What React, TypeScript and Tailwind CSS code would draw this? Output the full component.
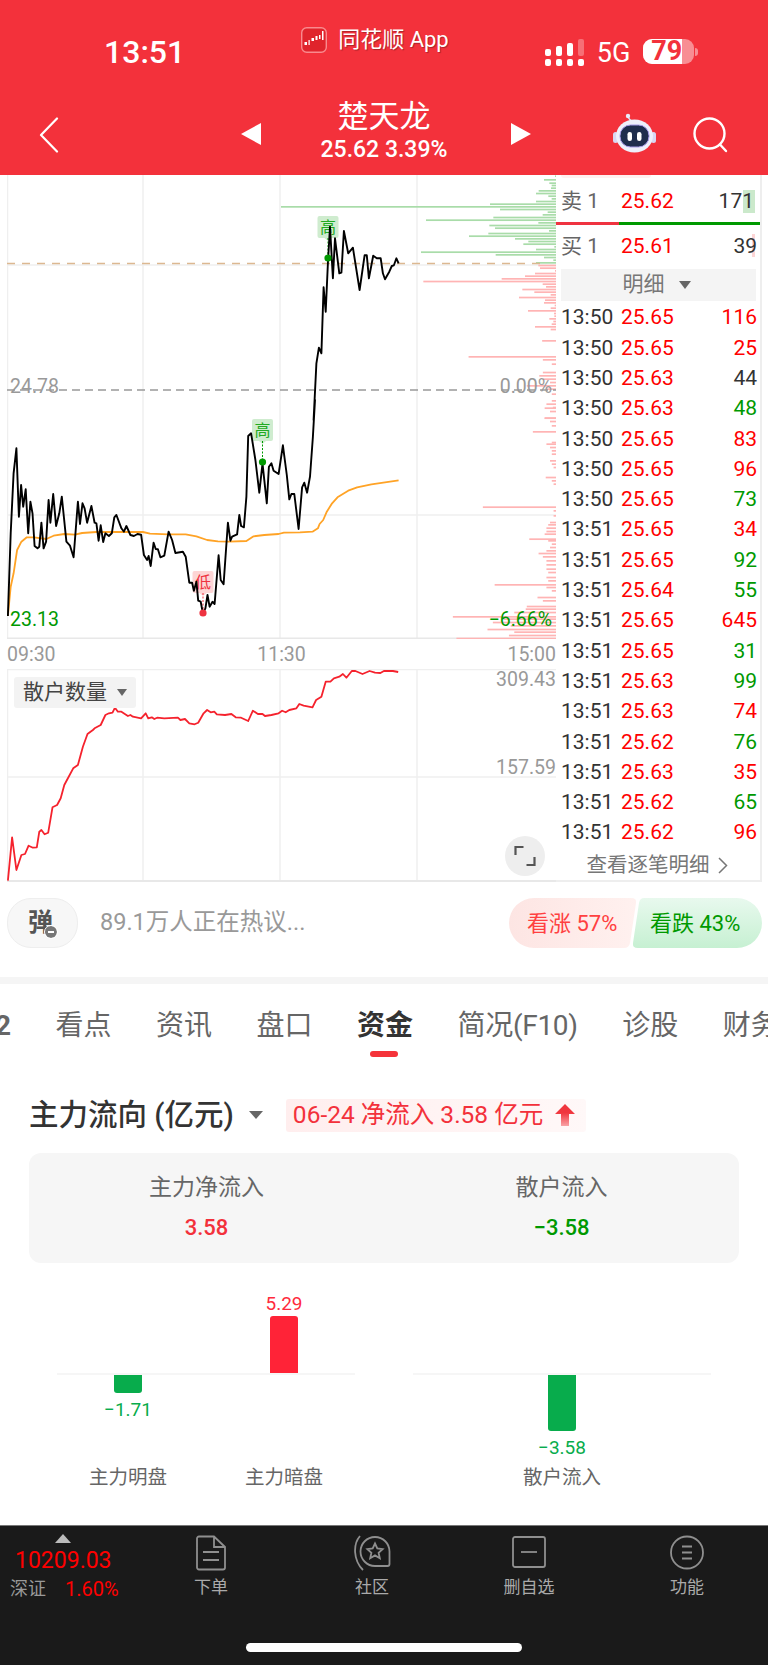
import React from 'react';

type P = [number, number];

const priceA: P[] = [[22,648],[30,400],[38,220],[46,145],[53,350],[59,255],[65,320],[72,268],[79,400],[85,305],[91,340],[97,438],[105,445],[110,440],[116,368],[122,445],[129,425],[136,300],[141,368],[149,282],[157,378],[166,340],[173,290],[186,425],[196,437],[206,472],[218,305],[224,372],[231,310],[237,325],[244,368],[256,318],[265,368],[270,370],[276,422],[282,376],[289,426],[295,400],[305,408],[313,400],[320,352],[326,345],[340,385],[347,395],[354,378],[365,405],[375,408],[385,402],[395,404],[403,465],[412,480],[416,468],[422,498],[430,428],[436,447],[442,448],[449,472],[460,467],[472,395],[482,420],[491,459],[512,455],[520,470],[530,548],[538,548],[543,572],[550,545],[555,602],[562,605],[568,640],[575,625],[581,585],[587,620],[595,605],[601,612],[612,466],[618,540],[626,553],[638,368],[645,422],[650,410],[664,403],[670,345],[675,378],[683,382],[690,290],[695,108],[703,100],[715,180],[726,278],[735,190],[747,310],[753,200],[760,190],[766,212],[780,222],[792,136],[803,225],[810,298],[816,282],[824,282],[836,387],[846,262],[852,248],[860,278],[868,230],[876,110],[882,0]];
const priceB: P[] = [[878,750],[886,580],[893,533],[900,550],[906,352],[912,425],[918,280],[924,170],[932,325],[938,205],[950,310],[956,308],[963,183],[975,250],[988,233],[1007,360],[1021,256],[1027,256],[1033,325],[1045,257],[1055,265],[1066,265],[1072,310],[1078,328],[1090,305],[1097,288],[1103,286],[1110,265],[1116,280]];
const avg: P[] = [[22,648],[30,560],[38,520],[48,450],[60,425],[75,412],[95,412],[130,417],[150,407],[180,402],[210,404],[230,399],[270,396],[350,396],[400,396],[420,401],[470,403],[520,403],[550,409],[580,420],[610,424],[640,425],[690,423],[710,409],[740,405],[780,402],[795,398],[840,397],[875,395],[890,385],[895,372],[905,360],[915,335],[930,310],[945,292],[975,272],[1000,262],[1040,253],[1116,241]];
const retail: P[] = [[22,692],[34,562],[46,660],[60,615],[70,612],[80,587],[92,593],[103,592],[110,545],[116,540],[125,553],[135,548],[147,472],[160,465],[170,445],[180,405],[190,385],[205,355],[218,345],[232,290],[245,252],[260,240],[265,235],[282,225],[295,195],[305,190],[315,188],[322,173],[330,185],[340,185],[358,198],[365,195],[372,200],[395,205],[408,190],[415,205],[425,202],[432,207],[440,203],[460,205],[498,203],[505,210],[518,207],[530,220],[545,223],[555,218],[570,190],[580,180],[590,187],[600,185],[607,193],[630,195],[648,192],[660,202],[675,203],[695,213],[708,182],[722,192],[735,192],[742,198],[760,195],[780,190],[790,182],[800,187],[810,180],[830,175],[838,162],[850,167],[875,172],[885,150],[900,140],[912,95],[925,95],[935,85],[950,80],[960,72],[970,83],[985,63],[995,63],[1015,72],[1035,63],[1050,68],[1065,69],[1075,63],[1100,63],[1115,66]];

// y, left edge of the bar as read off the crops
const greenBars: P[] = [[16,465],[27,432],[37,448],[44,455],[52,453],[60,416],[68,408],[76,445],[84,455],[92,408],[100,270],[116,300],[124,443],[132,428],[140,280],[148,78],[156,415],[164,268],[172,285],[180,447],[188,265],[196,207],[204,345],[212,385],[220,370],[228,463],[236,408],[244,63],[252,287],[260,432],[268,460],[276,408]];
const redBarsTop: P[] = [[284,415],[292,420],[300,465],[308,405],[316,375],[324,305],[332,70],[340,428],[348,438],[356,367],[364,403],[372,452],[380,357],[388,435],[396,432],[404,464],[412,452],[420,384],[428,462],[436,463],[444,448],[452,460],[460,455],[468,405],[476,452]];
const redBarsMid: P[] = [[510,1518],[558,1312],[567,1520],[580,1545],[605,1520],[615,1510],[625,1520],[635,1540],[645,1475],[655,1530],[670,1545],[690,1545],[710,1548],[742,1525],[765,1545]];
const redBarsLow: P[] = [[10,1530],[22,1525],[32,1540],[52,1525],[62,1540],[93,1492],[125,1545],[130,1530],[140,1540],[150,1545],[160,1545],[180,1540],[190,1545],[200,1550],[230,1528],[240,1545],[250,1550],[319,1352],[330,1550],[345,1550],[365,1540],[372,1535],[382,1530],[392,1530],[400,1525],[415,1482],[420,1535],[430,1545],[440,1540],[450,1530],[458,1508],[468,1520],[480,1530],[492,1530],[505,1530],[515,1535],[530,1530],[540,1535],[552,1385],[560,1530],[570,1545],[590,1505],[600,1520],[617,1475],[625,1472],[635,1440],[648,1268],[655,1410],[665,1380],[675,1430],[686,1365],[694,1440],[704,1425],[713,1278]];

const ticks: [string, string, string][] = [
  ['13:50', '25.65', '116'], ['13:50', '25.65', '25'], ['13:50', '25.63', '44'],
  ['13:50', '25.63', '48'], ['13:50', '25.65', '83'], ['13:50', '25.65', '96'],
  ['13:50', '25.65', '73'], ['13:51', '25.65', '34'], ['13:51', '25.65', '92'],
  ['13:51', '25.64', '55'], ['13:51', '25.65', '645'], ['13:51', '25.65', '31'],
  ['13:51', '25.63', '99'], ['13:51', '25.63', '74'], ['13:51', '25.62', '76'],
  ['13:51', '25.63', '35'], ['13:51', '25.62', '65'], ['13:51', '25.62', '96'],
];
const tickColors = ['text-[#f00]', 'text-[#f00]', 'text-[#333]', 'text-[#090]', 'text-[#f00]', 'text-[#f00]', 'text-[#090]', 'text-[#f00]', 'text-[#090]', 'text-[#090]', 'text-[#f00]', 'text-[#090]', 'text-[#090]', 'text-[#f00]', 'text-[#090]', 'text-[#f00]', 'text-[#090]', 'text-[#f00]'];

function line(points: P[], y0: number) {
  return points.map(([x, y]) => `${(x / 2.8).toFixed(1)},${(y0 + y / 3).toFixed(1)}`).join(' ');
}

function Tag({ x, y, text, bg, color }: { x: number; y: number; text: string; bg: string; color: string }) {
  return (
    <g>
      <rect x={x} y={y} width="21" height="22" rx="2" fill={bg} />
      <path d={`M${x + 7} ${y + 22}l3.500 3 3.500-3z`} fill={bg} />
      <text x={x + 10.5} y={y + 17} textAnchor="middle" fontSize="16" fill={color}>{text}</text>
    </g>
  );
}

function PriceChart() {
  const grid = '#efefef';
  return (
    <div className="relative h-[464px]">
      <svg width="549" height="464" viewBox="7 175 549 464" className="block">
        {[7.5, 143, 280, 417].map((x) => <line key={x} x1={x} x2={x} y1="175" y2="639" stroke={grid} strokeWidth="1.500" />)}
        <line x1="7" x2="556" y1="265" y2="265" stroke={grid} strokeWidth="1.500" />
        <line x1="7" x2="556" y1="515" y2="515" stroke={grid} strokeWidth="1.500" />
        <line x1="7" x2="556" y1="638.500" y2="638.500" stroke="#e8e8e8" strokeWidth="2" />
        {greenBars.map(([y, l]) => <rect key={y} x={400 + l / 3} y={170 + y / 3} width={156 - l / 3} height="1.700" fill="#a9dca9" />)}
        <rect x="281" y="206" width="275" height="1.700" fill="#a9dca9" />
        {redBarsTop.map(([y, l]) => <rect key={y} x={400 + l / 3} y={170 + y / 3} width={156 - l / 3} height="1.700" fill="#ffb4b4" />)}
        {redBarsMid.map(([y, l]) => <rect key={y} x={l / 2.8} y={170 + y / 3} width={556 - l / 2.8} height="1.700" fill="#ffb4b4" />)}
        {redBarsLow.map(([y, l]) => <rect key={y} x={l / 2.8} y={400 + y / 3} width={556 - l / 2.8} height="1.700" fill="#ffb4b4" />)}
        <line x1="7" x2="556" y1="390" y2="390" stroke="#999" strokeWidth="1.300" strokeDasharray="8 5" />
        <line x1="7" x2="540" y1="263.500" y2="263.500" stroke="#dcb891" strokeWidth="1.300" strokeDasharray="8 7" />
        <Tag x={317.500} y={216} text="高" bg="#cfeccf" color="#22aa22" />
        <Tag x={252} y={419} text="高" bg="#cfeccf" color="#22aa22" />
        <Tag x={192.500} y={571} text="低" bg="#fdd5d5" color="#ee3340" />
        <line x1="328" x2="328" y1="238" y2="258" stroke="#090" strokeDasharray="2 1.500" />
        <line x1="262.500" x2="262.500" y1="441" y2="462" stroke="#090" strokeDasharray="2 1.500" />
        <line x1="203" x2="203" y1="593" y2="613" stroke="#ee3340" strokeDasharray="2 1.500" />
        <polyline points={line(avg, 400)} fill="none" stroke="#ffa326" strokeWidth="1.800" strokeLinejoin="round" />
        <polyline points={`${line(priceA, 400)} ${line(priceB, 170)}`} fill="none" stroke="#000" strokeWidth="1.900" strokeLinejoin="round" />
        <circle cx="328" cy="258" r="3.600" fill="#090" />
        <circle cx="262.500" cy="462" r="3.600" fill="#090" />
        <circle cx="203" cy="613" r="3.600" fill="#ee3340" />
      </svg>
      <span className="absolute left-[3px] top-[200px] text-[19.500px] leading-[24px] text-[#999]">24.78</span>
      <span className="absolute right-[4px] top-[200px] text-[19.500px] leading-[24px] text-[#999]">0.00%</span>
      <span className="absolute left-[3px] top-[433px] text-[19.500px] leading-[24px] text-[#090]">23.13</span>
      <span className="absolute right-[4px] top-[433px] text-[19.500px] leading-[24px] text-[#090]">−6.66%</span>
    </div>
  );
}

function RetailChart() {
  const grid = '#efefef';
  return (
    <div className="relative h-[213px]">
      <svg width="549" height="213" viewBox="7 669 549 213" className="block">
        {[7.500, 143, 280, 417].map((x) => <line key={x} x1={x} x2={x} y1="669" y2="882" stroke={grid} strokeWidth="1.500" />)}
        <line x1="7" x2="556" y1="669.500" y2="669.500" stroke={grid} strokeWidth="1.500" />
        <line x1="7" x2="556" y1="777" y2="777" stroke={grid} strokeWidth="1.500" />
        <line x1="7" x2="556" y1="881" y2="881" stroke="#e8e8e8" strokeWidth="2" />
        <polyline points={line(retail, 650)} fill="none" stroke="#f5222d" strokeWidth="1.800" strokeLinejoin="round" />
      </svg>
      <div className="absolute left-[7px] top-[8px] flex h-[31px] w-[122px] items-center rounded-[3px] bg-[#f3f3f3] pl-[9px] text-[21px] text-[#444]">
        散户数量
        <span className="ml-[10px] h-0 w-0 border-x-[5px] border-t-[7px] border-x-transparent border-t-[#666]" />
      </div>
      <span className="absolute right-0 top-[0px] text-[19.500px] leading-[22px] text-[#999]">309.43</span>
      <span className="absolute right-0 top-[88px] text-[19.500px] leading-[22px] text-[#999]">157.59</span>
      <div className="absolute left-[498px] top-[167px] flex h-[40px] w-[40px] items-center justify-center rounded-full bg-[#eeeeee]">
        <svg width="22" height="22" viewBox="0 0 22 22" fill="none" stroke="#555" strokeWidth="2.200">
          <path d="M1.500 10V2h8M20.500 12v8h-8" />
        </svg>
      </div>
    </div>
  );
}

function Robot() {
  return (
    <svg width="43" height="40" viewBox="0 0 43 40">
      <path d="M19 9C17 6 15 6 15 3" fill="none" stroke="#dfe3f7" strokeWidth="1.500" />
      <circle cx="15" cy="3" r="2.200" fill="#e8ebfa" />
      <rect x="0" y="19" width="5" height="11" rx="2.500" fill="#d9d7f2" />
      <rect x="38" y="19" width="5" height="11" rx="2.500" fill="#d9d7f2" />
      <ellipse cx="21.500" cy="23" rx="18.500" ry="16.500" fill="#eef0fb" />
      <rect x="7" y="12" width="29" height="22" rx="10.500" fill="#1f2d4d" stroke="#a79be8" strokeWidth="1" />
      <rect x="14.500" y="19" width="4.500" height="9" rx="2.200" fill="#fff" />
      <rect x="24" y="19" width="4.500" height="9" rx="2.200" fill="#fff" />
    </svg>
  );
}

function Logo() {
  return (
    <svg width="26" height="26" viewBox="0 0 26 26">
      <rect x="0.700" y="0.700" width="24.600" height="24.600" rx="5" fill="#e0242c" stroke="#f98a8e" strokeWidth="1.400" />
      <g fill="#fff">
        <rect x="3.500" y="15" width="2.500" height="3" />
        <rect x="7.500" y="13" width="1.200" height="5" />
        <rect x="10.500" y="11" width="2.500" height="3" />
        <rect x="14.500" y="9" width="2" height="4" />
        <rect x="18" y="8" width="1.500" height="4" />
        <rect x="21" y="4" width="1.500" height="9" />
      </g>
    </svg>
  );
}

function StatusBar() {
  return (
    <div className="flex h-[95px] items-start">
      <span className="ml-[104px] mt-[33px] text-[32px] font-medium leading-[38px]">13:51</span>
      <div className="ml-[116px] mt-[27px] flex items-center">
        <Logo />
        <span className="ml-[11px] text-[22px] leading-[26px] [text-shadow:1px_1px_1px_rgba(0,0,0,0.3)]">同花顺 App</span>
      </div>
      <div className="ml-[96px] mt-[38px] flex h-[28px] w-[39px] items-end justify-between">
        {[0, 1, 2, 3].map((i) => (
          <div key={i} className="flex w-[6px] flex-col gap-[3px]">
            <div className={['rounded-[2px]', i === 3 ? 'bg-white/30' : 'bg-white', ['h-[7px]', 'h-[10px]', 'h-[13px]', 'h-[17px]'][i]].join(' ')} />
            <div className="h-[7px] rounded-[2px] bg-white" />
          </div>
        ))}
      </div>
      <span className="ml-[13px] mt-[37px] text-[27px] leading-[32px]">5G</span>
      <div className="ml-[13px] mt-[39px] flex items-center">
        <div className="flex h-[25px] w-[51px] rounded-[9px] bg-white/45">
          <div className="flex h-full w-[39px] items-center justify-end rounded-l-[9px] bg-white text-[27px] font-bold leading-none text-[#f3313b]">79</div>
        </div>
        <div className="ml-[1px] h-[8px] w-[3px] rounded-r-full bg-white/45" />
      </div>
    </div>
  );
}

function NavBar() {
  return (
    <div className="flex h-[80px] items-start">
      <svg className="ml-[39px] mt-[22px]" width="20" height="36" viewBox="0 0 20 36" fill="none" stroke="#fff" strokeWidth="2.200" strokeLinecap="round" strokeLinejoin="round">
        <path d="M18 1.500 2 18l16 16.500" />
      </svg>
      <div className="ml-[182px] mt-[28px] h-0 w-0 border-y-[11px] border-r-[20px] border-y-transparent border-r-white" />
      <div className="flex w-[246px] flex-col items-center">
        <span className="mt-[1px] text-[31px] leading-[42px]">楚天龙</span>
        <span className="mt-[-1px] text-[23px] font-medium leading-[26px]">25.62 3.39%</span>
      </div>
      <div className="ml-[4px] mt-[28px] h-0 w-0 border-y-[11px] border-l-[20px] border-y-transparent border-l-white" />
      <div className="ml-[82px] mt-[18px]"><Robot /></div>
      <svg className="ml-[37px] mt-[22px]" width="36" height="37" viewBox="0 0 36 37" fill="none" stroke="#fff" strokeWidth="2.400" strokeLinecap="round">
        <circle cx="16.500" cy="16.500" r="15" />
        <path d="M27 27.500l6 6.500" />
      </svg>
    </div>
  );
}

function QuoteTable() {
  return (
    <div className="h-[707px] w-[206px] border-b-2 border-r-2 border-[#eeeeee] text-[21px]">
      <div className="ml-[5px] h-[3px] w-[90px] rounded-b bg-[#fff0f0]" />
      <div className="relative flex h-[44px] items-center pl-[5px] pt-[4px]">
        <span className="w-[60px] text-[#666]">卖 1</span>
        <span className="text-[#f00]">25.62</span>
        <span className="absolute right-[5px] top-[12px] h-[23px] w-[12px] bg-[#cbe9cb]" />
        <span className="relative ml-auto mr-[6px] text-[#333]">171</span>
      </div>
      <div className="flex h-[3px]">
        <div className="w-[63px] bg-[#ef3340]" />
        <div className="flex-1 bg-[#090]" />
      </div>
      <div className="relative flex h-[44px] items-center pl-[5px]">
        <span className="w-[60px] text-[#666]">买 1</span>
        <span className="text-[#f00]">25.61</span>
        <span className="absolute right-[5px] top-[9px] h-[23px] w-[3px] bg-[#fdd5d5]" />
        <span className="relative ml-auto mr-[3px] text-[#333]">39</span>
      </div>
      <div className="ml-[5px] mr-[4px] flex h-[32px] items-center justify-center bg-[#f4f4f4] pr-[4px] text-[21px] text-[#777]">
        明细
        <span className="ml-[14px] h-0 w-0 border-x-[6px] border-t-[8px] border-x-transparent border-t-[#666]" />
      </div>
      <div className="mt-[2px]">
        {ticks.map(([t, p, q], i) => (
          <div key={i} className="flex h-[30.300px] items-center pl-[5px] pr-[3px]">
            <span className="w-[60px] text-[#333]">{t}</span>
            <span className="text-[#f00]">{p}</span>
            <span className={['ml-auto', tickColors[i]].join(' ')}>{q}</span>
          </div>
        ))}
      </div>
      <div className="flex h-[34px] items-center justify-center pr-[2px] text-[20.500px] text-[#777]">
        查看逐笔明细
        <svg className="ml-[8px]" width="10" height="17" viewBox="0 0 10 17" fill="none" stroke="#777" strokeWidth="1.500"><path d="M1 1l7.500 7.500L1 16" /></svg>
      </div>
    </div>
  );
}

function Sentiment() {
  return (
    <div className="mt-[16px] flex h-[50px] pl-[7px]">
      <div className="relative flex w-[71px] items-center justify-center rounded-[24px] border border-[#eeeeee] bg-[#f7f7f7] pb-[1px] pr-[4px] text-[25px] font-bold text-[#555]">
        弹
        <span className="absolute left-[37px] top-[27px] flex h-[12px] w-[12px] items-center justify-center rounded-full bg-[#777] outline-1 outline-white">
          <span className="h-[2px] w-[6px] bg-white" />
        </span>
      </div>
      <span className="ml-[22px] self-center text-[23.500px] text-[#999]">89.1万人正在热议...</span>
      <div className="ml-auto flex">
        <div className="flex h-[50px] w-[128px] items-center bg-gradient-to-r from-[#fde5e3] to-[#fff1ef] pl-[18px] text-[22px] text-[#ff4040] [clip-path:path('M25_0H122Q128_0_127_5L121_45Q120_50_115_50H25A25_25_0_0_1_25_0Z')]">看涨 57%</div>
        <div className="-ml-[4px] mr-[6px] flex h-[50px] w-[129px] items-center bg-gradient-to-b from-[#e8f9ee] to-[#c6f0d2] pl-[17px] text-[22px] text-[#090] [clip-path:path('M11_0H104A25_25_0_0_1_104_50H5Q-1_50_0_45L6_5Q7_0_11_0Z')]">看跌 43%</div>
      </div>
    </div>
  );
}

const tabs = ['看点', '资讯', '盘口', '资金', '简况(F10)', '诊股', '财务'];

function Tabs() {
  return (
    <div className="flex h-[78px] items-center gap-[44.500px] overflow-hidden whitespace-nowrap pt-[5px] text-[28px] text-[#666]">
      <span className="flex w-[11px] shrink-0 justify-end overflow-hidden font-bold">2</span>
      {tabs.map((t) => (
        <span key={t} className={t === '资金' ? 'relative shrink-0 font-bold text-[#333]' : t === '简况(F10)' ? 'shrink-0 tracking-[-0.3px]' : 'shrink-0'}>
          {t}
          {t === '资金' && <span className="absolute left-[13px] top-[46px] h-[6px] w-[28px] rounded-full bg-[#f5333a]" />}
        </span>
      ))}
    </div>
  );
}

type Col = { value: string; label: string; bar: string; up: boolean };

function BarGroup({ cols, cls }: { cols: Col[]; cls: string }) {
  return (
    <div className="w-[298px]">
      <div className={['flex h-[83px] items-end', cls].join(' ')}>
        {cols.map((c) => (
          <div key={c.label} className="flex w-[100px] flex-col items-center">
            {c.up && (
              <>
                <span className="text-[19px] leading-[24px] text-[#ff2a3c]">{c.value}</span>
                <div className={['w-[28px] rounded-t-[3px] bg-[#ff2337]', c.bar].join(' ')} />
              </>
            )}
          </div>
        ))}
      </div>
      <div className="h-[2px] bg-[#f6f6f6]" />
      <div className={['flex h-[85px] items-start', cls].join(' ')}>
        {cols.map((c) => (
          <div key={c.label} className="flex w-[100px] flex-col items-center">
            {!c.up && (
              <>
                <div className={['w-[28px] rounded-b-[3px] bg-[#08ac4c]', c.bar].join(' ')} />
                <span className="mt-[5px] text-[19px] leading-[24px] text-[#08ac4c]">{c.value}</span>
              </>
            )}
          </div>
        ))}
      </div>
      <div className={['flex h-[36px] items-center', cls].join(' ')}>
        {cols.map((c) => (
          <span key={c.label} className="w-[100px] text-center text-[19.500px] text-[#666]">{c.label}</span>
        ))}
      </div>
    </div>
  );
}

function CapitalFlow() {
  return (
    <div>
      <div className="mt-[36px] flex h-[34px] items-center pl-[29px]">
        <span className="text-[29.500px] font-medium text-[#333]">主力流向 (亿元)</span>
        <span className="ml-[15px] h-0 w-0 border-x-[7px] border-t-[8px] border-x-transparent border-t-[#666]" />
        <div className="ml-[23px] flex h-[33px] w-[300px] items-center rounded-[3px] bg-gradient-to-r from-[#ffeeee] to-[#fff8f8] pl-[7px] text-[24.500px] text-[#f3313b]">
          06-24 净流入 3.58 亿元
          <svg className="ml-[12px]" width="20" height="22" viewBox="0 0 20 22">
            <defs>
              <linearGradient id="upArrow" x1="0" x2="0" y1="0" y2="1">
                <stop offset="0.400" stopColor="#f0363e" />
                <stop offset="1" stopColor="#f9a3a6" />
              </linearGradient>
            </defs>
            <path d="M10 0 20 10H14V22H6V10H0Z" fill="url(#upArrow)" />
          </svg>
        </div>
      </div>
      <div className="mx-[29px] mt-[21px] grid h-[110px] grid-cols-[355px_355px] rounded-[12px] bg-[#f6f6f6] pt-[21px] text-center">
        <div>
          <div className="text-[23px] leading-[28px] text-[#666]">主力净流入</div>
          <div className="mt-[12px] text-[22px] font-medium leading-[28px] text-[#f3313b]">3.58</div>
        </div>
        <div>
          <div className="text-[23px] leading-[28px] text-[#666]">散户流入</div>
          <div className="mt-[12px] text-[22px] font-medium leading-[28px] text-[#090]">−3.58</div>
        </div>
      </div>
      <div className="mt-[27px] flex gap-[58px] pl-[57px]">
        <BarGroup
          cls="gap-[56px] pl-[21px]"
          cols={[
            { value: '−1.71', label: '主力明盘', bar: 'h-[18px]', up: false },
            { value: '5.29', label: '主力暗盘', bar: 'h-[57px]', up: true },
          ]}
        />
        <BarGroup
          cls="pl-[99px]"
          cols={[{ value: '−3.58', label: '散户流入', bar: 'h-[56px]', up: false }]}
        />
      </div>
    </div>
  );
}

const footerItems = [
  { label: '下单', ml: 'ml-[0px]' },
  { label: '社区', ml: 'ml-[61px]' },
  { label: '删自选', ml: 'ml-[57px]' },
  { label: '功能', ml: 'ml-[58px]' },
];

function FooterIcon({ name }: { name: string }) {
  const c = { fill: 'none', stroke: '#8f8f8f', strokeWidth: 1.800 };
  if (name === '下单') {
    return (
      <svg width="32" height="36" viewBox="0 0 32 36" {...c}>
        <path d="M4 1.500h15L30 12v20.500a2 2 0 0 1-2 2H4a2 2 0 0 1-2-2v-29a2 2 0 0 1 2-2zM19 1.500V12h11M8 17h16M8 25h16" />
      </svg>
    );
  }
  if (name === '社区') {
    return (
      <svg width="37" height="36" viewBox="0 0 37 36" {...c}>
        <path d="M21 31A14.500 14.500 0 1 1 35.500 16.500V29a2 2 0 0 1-2 2Z" />
        <path d="M6 1C-1 9-1 25 9 35" />
        <path d="M21 8.500l2.300 5 5.300.6-4 3.700 1.200 5.400-4.800-2.800-4.800 2.800 1.200-5.400-4-3.700 5.300-.6z" />
      </svg>
    );
  }
  if (name === '删自选') {
    return (
      <svg width="34" height="36" viewBox="0 0 34 36" {...c}>
        <rect x="1" y="2" width="32" height="30" rx="2" />
        <path d="M9 17h16" />
      </svg>
    );
  }
  return (
    <svg width="34" height="36" viewBox="0 0 34 36" {...c}>
      <circle cx="17" cy="17.500" r="16" />
      <path d="M12 11.500h10M12 17.500h10M12 23.500h10" />
    </svg>
  );
}

function Footer() {
  return (
    <div className="mt-[29px] h-[140px] border-t border-[#777] bg-[#1a1a1a]">
      <div className="flex pl-[10px]">
        <div className="w-[151px]">
          <div className="ml-[45px] mt-[8px] h-0 w-0 border-x-[8px] border-b-[9px] border-x-transparent border-b-[#bbbbbb]" />
          <div className="ml-[5px] mt-[4px] text-[23px] leading-[28px] text-[#f00]">10209.03</div>
          <div className="flex items-center">
            <span className="w-[55px] text-[18px] leading-[28px] text-[#999]">深证</span>
            <span className="text-[20px] leading-[28px] text-[#f00]">1.60%</span>
          </div>
        </div>
        {footerItems.map((it) => (
          <div key={it.label} className={['flex w-[100px] flex-col items-center pt-[9px]', it.ml].join(' ')}>
            <div className="flex h-[36px] items-center"><FooterIcon name={it.label} /></div>
            <span className="mt-[4px] text-[17px] leading-[24px] text-[#aaaaaa]">{it.label}</span>
          </div>
        ))}
      </div>
      <div className="ml-[246px] mt-[40px] h-[9px] w-[276px] rounded-full bg-white" />
    </div>
  );
}

export default function App() {
  return (
    <div className="h-[1665px] w-[768px] overflow-hidden bg-white font-['Roboto','Noto_Sans_CJK_SC',sans-serif]">
      <div className="h-[175px] bg-[#f3313b] text-white">
        <StatusBar />
        <NavBar />
      </div>
      <div className="flex pl-[7px]">
        <div className="w-[549px]">
          <PriceChart />
          <div className="flex h-[30px] items-center justify-between pt-[2px] text-[19.500px] text-[#999]">
            <span>09:30</span>
            <span>11:30</span>
            <span>15:00</span>
          </div>
          <RetailChart />
        </div>
        <QuoteTable />
      </div>
      <Sentiment />
      <div className="mt-[29px] h-[7px] bg-[#f5f5f5]" />
      <Tabs />
      <CapitalFlow />
      <Footer />
    </div>
  );
}
